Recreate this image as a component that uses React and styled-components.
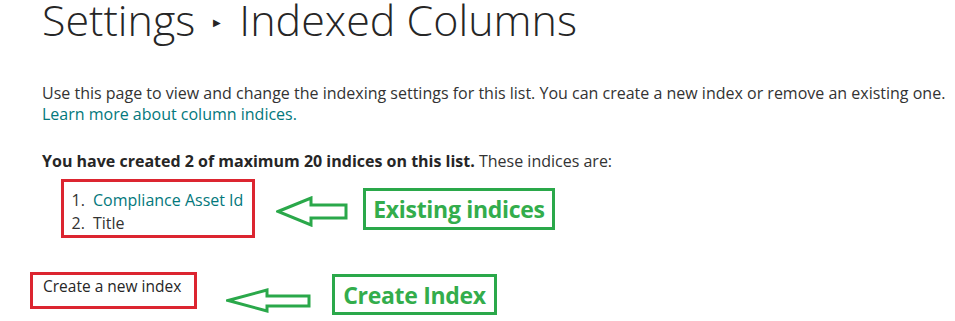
import styled, { createGlobalStyle } from "styled-components";

const GlobalStyle = createGlobalStyle`
  html, body {
    margin: 0;
    padding: 0;
    background: #ffffff;
  }
  body {
    font-family: "Open Sans", "Noto Sans", sans-serif;
    color: #333333;
  }
`;

const Page = styled.div`
  width: 955px;
  height: 321px;
  padding-left: 42px;
  box-sizing: border-box;
  overflow: hidden;
`;

const Title = styled.h1`
  margin: 0;
  font-size: 43px;
  font-weight: 300;
  line-height: 40px;
  color: #262626;
  display: flex;
  align-items: center;
  gap: 18px;
  white-space: nowrap;
`;

const Crumb = styled.span`
  font-size: 10px;
  line-height: 1;
  color: #262626;
  margin-top: 4px;
`;

const Intro = styled.p`
  margin: 43px 0 0;
  font-size: 16px;
  line-height: 21px;
  color: #333333;
  white-space: nowrap;
`;

const Link = styled.a`
  color: #03787c;
  text-decoration: none;
`;

const Summary = styled.p`
  margin: 26px 0 0;
  font-size: 16px;
  line-height: 21px;
  color: #333333;
  white-space: nowrap;

  strong {
    font-weight: 700;
    color: #262626;
  }
`;

const Row = styled.div`
  display: flex;
  align-items: ${(p) => p.$align || "center"};
  margin-left: ${(p) => p.$indent}px;
  margin-top: ${(p) => p.$top}px;
`;

const RedBox = styled.div`
  border: 3px solid #dc2530;
  box-sizing: border-box;
  width: ${(p) => p.$w}px;
  height: ${(p) => p.$h}px;
  padding: ${(p) => p.$pad};
  flex-shrink: 0;
`;

const IndexList = styled.ol`
  margin: 0;
  padding: 0 0 0 25px;
  font-size: 16px;
  line-height: 23px;
  color: #333333;

  li {
    padding-left: 4px;
  }
`;

const ListLink = styled.span`
  color: #03787c;
`;

const PlainLink = styled.span`
  font-size: 15.5px;
  line-height: 20px;
  color: #262626;
`;

const Arrow = styled.svg`
  display: block;
  flex-shrink: 0;
  margin-left: ${(p) => p.$left}px;
  margin-top: ${(p) => p.$mt || 0}px;
`;

const GreenBox = styled.div`
  border: 3px solid #2aa84a;
  box-sizing: border-box;
  width: ${(p) => p.$w}px;
  height: ${(p) => p.$h}px;
  margin-left: ${(p) => p.$left}px;
  margin-top: ${(p) => p.$mt || 0}px;
  display: flex;
  align-items: center;
  justify-content: center;
  font-family: "Open Sans", "Noto Sans", sans-serif;
  font-weight: 700;
  font-size: ${(p) => p.$size || 22}px;
  color: #33ad4c;
  white-space: nowrap;
  letter-spacing: -0.3px;
  flex-shrink: 0;
`;

const LeftArrow = ({ w, h, left, mt }) => {
  const head = Math.round(w * 0.48);
  const shaftTop = Math.round(h * 0.3);
  const shaftBot = Math.round(h * 0.72);
  return (
    <Arrow width={w} height={h} viewBox={`0 0 ${w} ${h}`} $left={left} $mt={mt}>
      <path
        d={`M2 ${h / 2} L${head} 2 L${head} ${shaftTop} L${w - 2} ${shaftTop} L${w - 2} ${shaftBot} L${head} ${shaftBot} L${head} ${h - 2} Z`}
        fill="none"
        stroke="#2aa84a"
        strokeWidth="3"
        strokeLinejoin="miter"
      />
    </Arrow>
  );
};

export default function App() {
  return (
    <>
      <GlobalStyle />
      <Page>
        <Title>
          <span>Settings</span>
          <Crumb>▶</Crumb>
          <span>Indexed Columns</span>
        </Title>

        <Intro>
          Use this page to view and change the indexing settings for this list. You can create a new index or remove an existing one.
          <br />
          <Link href="#">Learn more about column indices.</Link>
        </Intro>

        <Summary>
          <strong>You have created 2 of maximum 20 indices on this list.</strong> These indices are:
        </Summary>

        <Row $indent={19} $top={7}>
          <RedBox $w={194} $h={59} $pad="7px 0 0 0">
            <IndexList>
              <li>
                <ListLink>Compliance Asset Id</ListLink>
              </li>
              <li>Title</li>
            </IndexList>
          </RedBox>
          <LeftArrow w={72} h={31} left={21} mt={6} />
          <GreenBox $w={192} $h={42} $left={15} $size={23}>
            Existing indices
          </GreenBox>
        </Row>

        <Row $indent={-12} $top={34} $align="flex-start">
          <RedBox $w={167} $h={37} $pad="0 0 0 10px">
            <PlainLink>Create a new index</PlainLink>
          </RedBox>
          <LeftArrow w={85} h={25} left={29} mt={16} />
          <GreenBox $w={165} $h={41} $left={21} $mt={2} $size={23}>
            Create Index
          </GreenBox>
        </Row>
      </Page>
    </>
  );
}
